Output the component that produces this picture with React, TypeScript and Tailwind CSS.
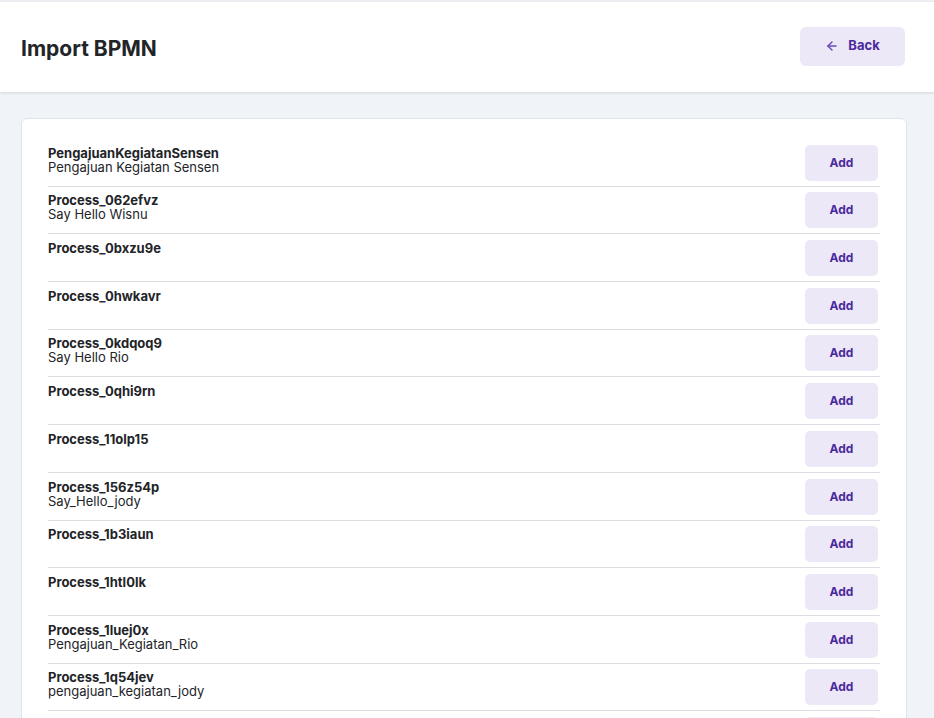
import { ArrowLeft } from "lucide-react";

const processes = [
  { id: "PengajuanKegiatanSensen", name: "Pengajuan Kegiatan Sensen" },
  { id: "Process_062efvz", name: "Say Hello Wisnu" },
  { id: "Process_0bxzu9e", name: "" },
  { id: "Process_0hwkavr", name: "" },
  { id: "Process_0kdqoq9", name: "Say Hello Rio" },
  { id: "Process_0qhi9rn", name: "" },
  { id: "Process_11olp15", name: "" },
  { id: "Process_156z54p", name: "Say_Hello_jody" },
  { id: "Process_1b3iaun", name: "" },
  { id: "Process_1htl0lk", name: "" },
  { id: "Process_1luej0x", name: "Pengajuan_Kegiatan_Rio" },
  { id: "Process_1q54jev", name: "pengajuan_kegiatan_jody" },
  { id: "Process_1rz0w2k", name: "" },
];

const App = () => {
  return (
    <div
      className="min-h-screen bg-[#f0f3f8] text-[#222428]"
      style={{ fontFamily: "Inter, 'Liberation Sans', sans-serif" }}
    >
      <div className="h-[2px] bg-[#eef0f4]" />
      <header className="flex h-[90px] items-center justify-between bg-white pl-[21px] pr-[29px] shadow-[0_1px_3px_rgba(0,0,0,0.12)]">
        <h1 className="pt-[4px] text-[21px] font-bold">Import BPMN</h1>
        <button className="-mt-[2px] flex h-[39px] w-[105px] items-center justify-center gap-[9px] rounded-[6px] bg-[#ede8f8] text-[13px] font-bold text-[#4a2a9c]">
          <ArrowLeft className="h-[14px] w-[14px] text-[#6b4bb5]" strokeWidth={2.5} />
          Back
        </button>
      </header>
      <main className="pl-[21px] pr-[27px] pt-[26px]">
        <div className="rounded-[6px] border border-[#dfe3ea] bg-white pl-[26px] pr-[26px] pt-[20px]">
          {processes.map((p) => (
            <div
              key={p.id}
              className="flex items-start justify-between border-b border-[#dcdde0] pt-[5.7px] pb-[5px]"
            >
              <div className="pt-[1px] text-[13px] leading-[14px]">
                <div className="font-bold">{p.id}</div>
                {p.name && <div>{p.name}</div>}
              </div>
              <button className="mr-[2px] h-[36px] w-[73px] rounded-[5px] bg-[#ede8f8] text-[12px] font-bold text-[#4a2a9c]">
                Add
              </button>
            </div>
          ))}
        </div>
      </main>
    </div>
  );
};

export default App;
